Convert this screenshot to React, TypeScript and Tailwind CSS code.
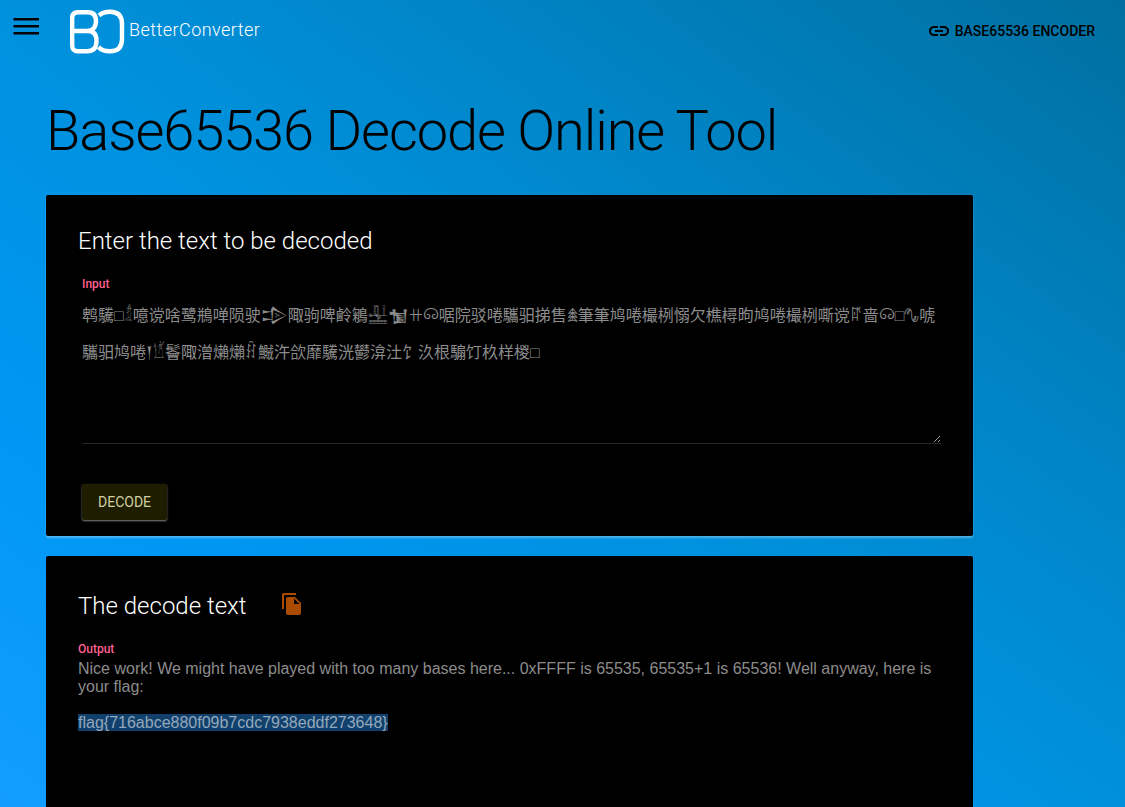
import React, { useState } from "react";

const BLOCKS: number[] = [];
const addBlocks = (from: number, to: number) => {
  for (let b = from; b <= to; b++) BLOCKS.push(b << 8);
};
addBlocks(0x34, 0x4c);
addBlocks(0x4e, 0x9e);
addBlocks(0xa1, 0xa3);
addBlocks(0xa5, 0xa5);
addBlocks(0x106, 0x106);
addBlocks(0x120, 0x122);
addBlocks(0x130, 0x133);
addBlocks(0x144, 0x145);
addBlocks(0x168, 0x169);
addBlocks(0x200, 0x285);

/** Packs two bytes into each code point; a trailing odd byte uses the 0x1500 block. */
function encode(text: string): string {
  let out = "";
  for (let i = 0; i < text.length; i += 2) {
    const low = text.charCodeAt(i);
    const base = i + 1 < text.length ? BLOCKS[text.charCodeAt(i + 1)] : 0x1500;
    out += String.fromCodePoint(base + low);
  }
  return out;
}

/** Shows a box for characters of scripts that few fonts cover. */
function boxRareScripts(text: string): string {
  return text.replace(/[\u{14400}-\u{1467F}\u{20000}-\u{2FFFF}]/gu, "□");
}

const MESSAGE =
  "Nice work! We might have played with too many bases here... 0xFFFF is 65535, 65535+1 is 65536! Well anyway, here is your flag:";
const FLAG = "flag{716abce880f09b7cdc7938eddf273648}";

function Logo() {
  return (
    <svg viewBox="0 0 56 46" className="h-[46px] w-14" fill="none" stroke="#fff" strokeWidth="4.4" aria-hidden="true">
      <path d="M8 3.2H19C25 3.2 27 7 27 12C27 18 24 22 18 22H3.2H19C25 22 27.5 26 27.5 32C27.5 39 24 42.3 18 42.3H9C5 42.3 3.2 40.5 3.2 36V9C3.2 5 5 3.2 9 3.2" />
      <path d="M30 6.5C33 4 37 2.8 41 2.8C49 2.8 53 7 53 15V30C53 38 49 42.3 41 42.3C36 42.3 32 41 29.5 38" />
    </svg>
  );
}

export default function App() {
  const [input, setInput] = useState(boxRareScripts(encode(`${MESSAGE}\n\n\n\n${FLAG}`)));
  return (
    <div className="min-h-screen bg-[linear-gradient(to_top_right,#149eff,#0097f4_24%,#0091dd_50%,#0083c3_73%,#006f9f)] font-[Roboto,'Noto_Sans_CJK_SC',sans-serif]">
      <header className="flex h-16 items-center justify-between pr-[30px] pl-3">
        <div className="flex items-center">
          <button type="button" aria-label="Menu" className="mb-2.5 h-7 w-7">
            <svg viewBox="0 0 28 28" className="h-7 w-7" fill="#000">
              <path d="M1.500 5h25.500v2.600H1.500zM1.500 12h25.500v2.600H1.500zM1.500 19h25.500v2.600H1.500z" />
            </svg>
          </button>
          <a href="#" className="ml-[29px] flex items-center gap-1 text-white">
            <Logo />
            <span className="mb-1 text-lg font-light tracking-wide">BetterConverter</span>
          </a>
        </div>
        <a href="#" className="flex items-center gap-1 pb-0.5 text-sm font-medium text-black">
          <svg viewBox="0 0 24 24" className="h-6 w-6" fill="currentColor" aria-hidden="true">
            <path d="M3.9 12c0-1.71 1.39-3.1 3.1-3.1h4V7H7c-2.76 0-5 2.24-5 5s2.24 5 5 5h4v-1.900H7c-1.710 0-3.100-1.390-3.100-3.100zM8 13h8v-2H8v2zm9-6h-4v1.900h4c1.710 0 3.100 1.390 3.100 3.100s-1.390 3.100-3.100 3.100h-4V17h4c2.760 0 5-2.240 5-5s-2.240-5-5-5z" />
          </svg>
          BASE65536 ENCODER
        </a>
      </header>

      <main className="mr-[152px] ml-[46px] flex flex-col pt-[34px]">
        <h1 className="text-[56px] leading-[67px] font-light tracking-[-0.02em] text-black">Base65536 Decode Online Tool</h1>

        <section className="mt-[30px] rounded-xs bg-black px-8 pt-7 pb-4 shadow-[0_2px_2px_rgba(255,255,255,0.3)]">
          <h2 className="text-2xl leading-9 font-light text-white">Enter the text to be decoded</h2>
          <div className="mt-4 flex flex-col pl-1">
            <label htmlFor="input" className="text-xs leading-[18px] font-medium text-[#ff6090]">
              Input
            </label>
            <textarea
              id="input"
              spellCheck={false}
              value={input}
              onChange={(e) => setInput(e.target.value)}
              className="mt-1 h-[147px] resize-y overflow-hidden border-b border-[#262626] bg-transparent font-['Liberation_Sans','Noto_Sans_CJK_SC',sans-serif] text-base leading-[37px] text-[#8c8c8c] outline-none"
            />
          </div>
          <button
            type="button"
            className="mt-10 ml-1 h-9 rounded-xs bg-[#1f1d00] px-4 text-sm text-[#d0d0a0] shadow-[0_1px_2px_rgba(255,255,255,0.5)]"
          >
            DECODE
          </button>
        </section>

        <section className="mt-5 min-h-[270px] rounded-t-xs bg-black px-8 pt-8">
          <div className="flex items-center gap-[34px]">
            <h2 className="text-2xl leading-9 font-light text-white">The decode text</h2>
            <button type="button" aria-label="Copy" className="pb-1 text-[#ab4b00]">
              <svg viewBox="0 0 24 24" className="h-6 w-6" fill="currentColor">
                <path d="M16 1H4c-1.100 0-2 .9-2 2v14h2V3h12V1zm-1 4l6 6v10c0 1.100-.9 2-2 2H7.990C6.890 23 6 22.100 6 21l.01-14c0-1.100.89-2 1.990-2h7zm-1 7h5.500L14 6.500V12z" />
              </svg>
            </button>
          </div>
          <p className="mt-4 text-xs leading-[18px] font-medium text-[#ff6090]">Output</p>
          <div className="mt-0.5 font-['Liberation_Sans',sans-serif] text-base leading-[18px] text-[#8c8c8c]">
            <p>{MESSAGE}</p>
            <p className="mt-[18px]">
              <mark className="bg-[#10406b] text-[#94a8bb]">{FLAG}</mark>
            </p>
          </div>
        </section>
      </main>
    </div>
  );
}
